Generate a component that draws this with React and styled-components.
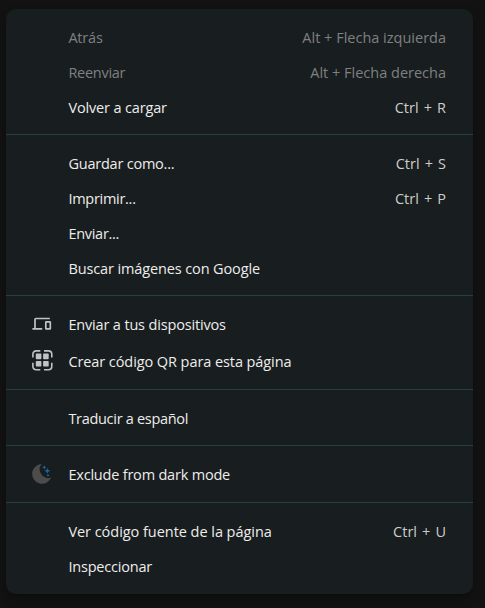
import React from "react";
import styled, { createGlobalStyle } from "styled-components";

const GlobalStyle = createGlobalStyle`
  * { box-sizing: border-box; }
  html, body { margin: 0; background: #121212; }
`;

const Page = styled.main`
  height: 608px;
  padding: 9px 12px 14px 6px;
  overflow: hidden;
  background: #121212;
  font-family: "Open Sans", "Noto Sans", sans-serif;
  font-size: 14.5px;
`;

const Menu = styled.div`
  width: 467px;
  height: 585px;
  background: #181d1f;
  border-radius: 10px;
  box-shadow: 0 5px 10px rgba(0, 0, 0, 0.28);
`;

const Section = styled.div`
  padding: ${(p) => (p.$icons ? 10 : 11)}px 27px 9px 26px;
  & + & {
    border-top: 1px solid #263f43;
  }
`;

const Row = styled.div`
  display: flex;
  align-items: center;
  height: ${(p) => (p.$tall ? 37 : 35)}px;
  color: ${(p) => (p.$disabled ? "#7f8081" : "#eeedeb")};
  white-space: nowrap;
`;

const IconSlot = styled.span`
  display: flex;
  width: 36.4px;
  height: 23px;
  flex: none;
`;

const Label = styled.span`
  letter-spacing: ${(p) => p.$tracking ?? 0}px;
`;

const Shortcut = styled.span`
  margin-left: auto;
  word-spacing: ${(p) => (p.$disabled ? 0 : 1.3)}px;
  color: ${(p) => (p.$disabled ? "#7f8081" : "#cfcdc9")};
`;

const DevicesIcon = () => (
  <svg width="22" height="23" viewBox="0 0 22 23" fill="none" stroke="#bfc3c5" strokeWidth="1.7">
    <path d="M3 15V6.4Q3 5.5 3.9 5.5H17.8M0.4 15.9H10.2" />
    <rect x="13.8" y="8.8" width="4.5" height="7.1" rx="0.4" />
  </svg>
);

const QrIcon = () => (
  <svg width="22" height="23" viewBox="0 0 22 23" fill="none" stroke="#bfc3c5" strokeWidth="1.6">
    <path d="M0.9 7.5V4.4Q0.9 0.9 4.4 0.9H8.3M12 0.9H16.3Q19.8 0.9 19.8 4.4V7.5M19.8 12.8V16.3Q19.8 19.8 16.3 19.8H12M8.3 19.8H4.4Q0.9 19.8 0.9 16.3V12.8" />
    <g fill="#bfc3c5" stroke="none">
      <rect x="3.8" y="3.6" width="5.6" height="5.6" rx="0.8" />
      <rect x="11.1" y="3.6" width="5.6" height="5.6" rx="0.8" />
      <rect x="3.8" y="10.9" width="5.6" height="5.6" rx="0.8" />
      <rect x="11.1" y="10.9" width="5.6" height="5.6" rx="0.8" />
    </g>
  </svg>
);

const MoonIcon = () => (
  <svg width="22" height="23" viewBox="0 0 22 23">
    <path fill="#4c4c4c" d="M9.6 1A9.9 9.9 0 1 0 19.2 14.6A8.7 8.7 0 0 1 9.6 1Z" />
    <g fill="#17699f">
      <path d="M12.3 2.2l.7 1.5 1.5.7-1.5.7-.7 1.5-.7-1.5-1.5-.7 1.5-.7z" />
      <path d="M15.4 4.9l.9 2 2 .9-2 .9-.9 2-.9-2-2-.9 2-.9z" />
      <path d="M16 10.7l.5 1.1 1.1.5-1.1.5-.5 1.1-.5-1.1-1.1-.5 1.1-.5z" />
    </g>
  </svg>
);

const sections = [
  {
    items: [
      { label: "Atrás", keys: "Alt + Flecha izquierda", disabled: true, tracking: -0.2 },
      { label: "Reenviar", keys: "Alt + Flecha derecha", disabled: true, tracking: -0.27 },
      { label: "Volver a cargar", keys: "Ctrl + R", tracking: -0.15 },
    ],
  },
  {
    items: [
      { label: "Guardar como...", keys: "Ctrl + S", tracking: -0.22 },
      { label: "Imprimir...", keys: "Ctrl + P", tracking: -0.28 },
      { label: "Enviar...", tracking: -0.28 },
      { label: "Buscar imágenes con Google", tracking: -0.12 },
    ],
  },
  {
    icons: true,
    items: [
      { label: "Enviar a tus dispositivos", icon: DevicesIcon, tracking: -0.16 },
      { label: "Crear código QR para esta página", icon: QrIcon, tracking: -0.08 },
    ],
  },
  { items: [{ label: "Traducir a español", tracking: -0.3 }] },
  {
    icons: true,
    items: [{ label: "Exclude from dark mode", icon: MoonIcon, tracking: -0.2 }],
  },
  {
    items: [
      { label: "Ver código fuente de la página", keys: "Ctrl + U", tracking: -0.04 },
      { label: "Inspeccionar", tracking: -0.2 },
    ],
  },
];

export default function App() {
  return (
    <Page>
      <GlobalStyle />
      <Menu role="menu">
        {sections.map((section, i) => (
          <Section key={i} $icons={section.icons}>
            {section.items.map(({ label, keys, disabled, icon: Icon, tracking }) => (
              <Row key={label} role="menuitem" $tall={section.icons} $disabled={disabled}>
                <IconSlot>{Icon && <Icon />}</IconSlot>
                <Label $tracking={tracking}>{label}</Label>
                {keys && <Shortcut $disabled={disabled}>{keys}</Shortcut>}
              </Row>
            ))}
          </Section>
        ))}
      </Menu>
    </Page>
  );
}
